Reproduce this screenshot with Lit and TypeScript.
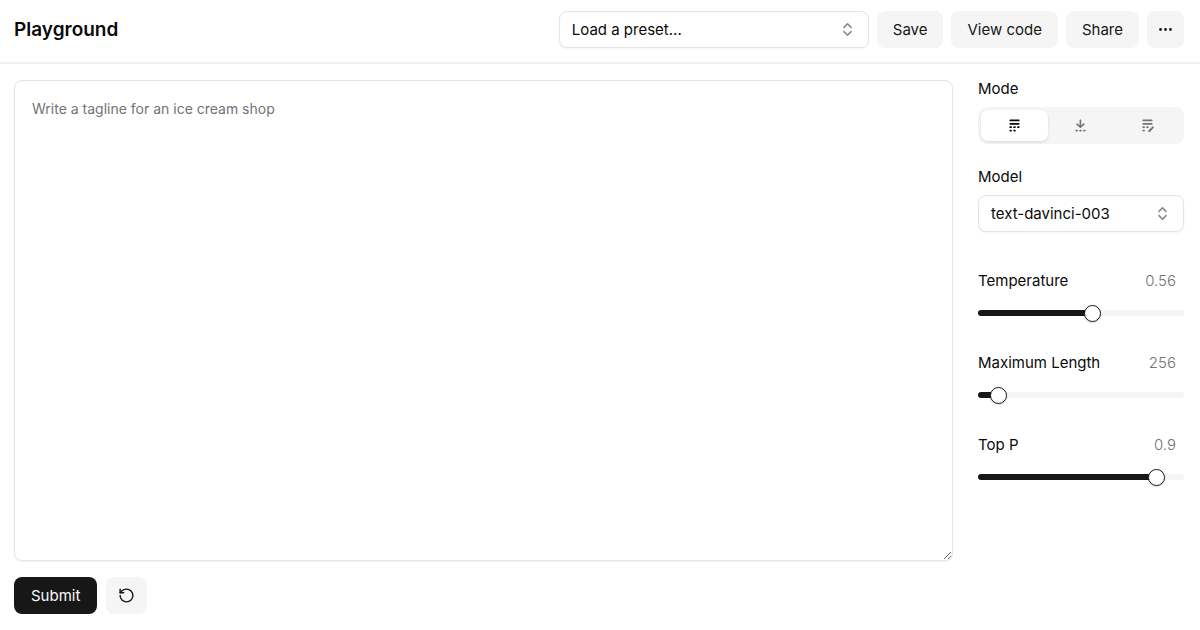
import { LitElement, html, css, svg } from "lit";
import { customElement, property, state } from "lit/decorators.js";
import { classMap } from "lit/directives/class-map.js";
import { styleMap } from "lit/directives/style-map.js";

const dash = (x: number, y: number, w = 3) =>
  svg`<rect x=${x} y=${y} width=${w} height="2" rx="1"></rect>`;

const modes = [
  {
    id: "complete",
    label: "Complete",
    icon: svg`${dash(4, 3, 12)}${dash(4, 7, 12)}${dash(4, 11)}${dash(4, 15)}${dash(8.5, 11)}${dash(8.5, 15)}${dash(13, 11)}`,
  },
  {
    id: "insert",
    label: "Insert",
    icon: svg`<path fill-rule="evenodd" d="M14.491 7.769a.888.888 0 0 1 .287.648.888.888 0 0 1-.287.648l-3.916 3.667a1.013 1.013 0 0 1-.692.268c-.26 0-.509-.097-.692-.268L5.275 9.065A.886.886 0 0 1 5 8.42a.889.889 0 0 1 .287-.64c.181-.17.427-.267.683-.269.257-.002.504.09.69.258L8.903 9.87V3.917c0-.243.103-.477.287-.649.183-.171.432-.268.692-.268.26 0 .509.097.692.268a.888.888 0 0 1 .287.649V9.87l2.245-2.102c.183-.172.432-.269.692-.269.26 0 .508.097.692.269Z"></path>${dash(4, 15)}${dash(8.5, 15)}${dash(13, 15)}`,
  },
  {
    id: "edit",
    label: "Edit",
    icon: svg`${dash(4, 3, 12)}${dash(4, 7, 12)}${dash(4, 11)}${dash(4, 15)}${dash(8.5, 11)}<path d="M17.154 11.346a1.182 1.182 0 0 0-1.671 0L11 15.829V17.5h1.671l4.483-4.483a1.182 1.182 0 0 0 0-1.671Z"></path>`,
  },
];

@customElement("param-slider")
class ParamSlider extends LitElement {
  @property() label = "";
  @property({ type: Number }) value = 0;
  @property({ type: Number }) max = 1;
  @property({ type: Number }) step = 0.1;

  static styles = css`
    :host {
      display: block;
    }
    .row {
      display: flex;
      justify-content: space-between;
      line-height: 20px;
      padding: 4px 0;
    }
    .value {
      padding-right: 8px;
      font-weight: 300;
      color: #737373;
    }
    .range {
      display: block;
      appearance: none;
      width: 100%;
      height: 17px;
      margin: 9px 0 0;
      background: none;
    }
    .range::-webkit-slider-runnable-track {
      height: 6px;
      border-radius: 3px;
      background: linear-gradient(#171717, #171717) 0 0 / var(--fill) 100% no-repeat #f5f5f5;
    }
    .range::-webkit-slider-thumb {
      appearance: none;
      box-sizing: border-box;
      width: 17px;
      height: 17px;
      margin-top: -5px;
      border: 1px solid #171717;
      border-radius: 50%;
      background: #fff;
      box-shadow: 0 1px 2px rgb(0 0 0 / 0.15);
    }
  `;

  private onInput(e: Event) {
    this.value = Number((e.target as HTMLInputElement).value);
  }

  render() {
    const fill = `${(this.value / this.max) * 100}%`;
    return html`
      <div class="row">
        <label for="range">${this.label}</label>
        <output class="value" for="range">${this.value}</output>
      </div>
      <input
        id="range"
        class="range"
        type="range"
        min="0"
        max=${this.max}
        step=${this.step}
        .value=${String(this.value)}
        style=${styleMap({ "--fill": fill })}
        @input=${this.onInput}
      />
    `;
  }
}

@customElement("app-root")
class AppRoot extends LitElement {
  @state() private mode = "complete";

  static styles = css`
    :host {
      display: flex;
      flex-direction: column;
      min-height: 100vh;
      background: #fff;
      color: #0a0a0a;
      font: 400 15px/20px "Inter", "Open Sans", sans-serif;
    }
    * {
      box-sizing: border-box;
    }
    button,
    select,
    textarea {
      font: inherit;
      color: inherit;
      margin: 0;
    }
    .header {
      display: flex;
      align-items: center;
      justify-content: space-between;
      padding: 11px 16px 14px 14px;
      border-bottom: 2px solid #f1f1f1;
    }
    .title {
      margin: 0;
      font-size: 19px;
      font-weight: 600;
      line-height: 28px;
    }
    .actions {
      display: flex;
      gap: 8px;
    }
    .preset {
      width: 310px;
    }
    .picker {
      display: grid;
      align-items: center;
    }
    .select {
      grid-area: 1 / 1;
      appearance: none;
      width: 100%;
      height: 37px;
      padding: 0 40px 0 12px;
      border: 1px solid #e5e5e5;
      border-radius: 8px;
      background: #fff;
      box-shadow: 0 1px 2px rgb(0 0 0 / 0.05);
    }
    .chevrons {
      grid-area: 1 / 1;
      justify-self: end;
      margin-right: 13px;
      opacity: 0.5;
      pointer-events: none;
    }
    .button {
      display: inline-flex;
      align-items: center;
      justify-content: center;
      height: 37px;
      padding: 0 16px;
      border: 0;
      border-radius: 8px;
      background: #f5f5f5;
      color: #171717;
      white-space: nowrap;
    }
    .square {
      width: 37px;
      padding: 0;
    }
    .reset {
      padding: 0 12px;
    }
    .primary {
      padding: 0 17px;
      background: #171717;
      color: #fafafa;
    }
    .line {
      width: 17px;
      height: 17px;
      fill: none;
      stroke: currentColor;
      stroke-width: 2;
      stroke-linecap: round;
      stroke-linejoin: round;
    }
    .main {
      flex: 1;
      display: grid;
      grid-template-columns: minmax(0, 1fr) 206px;
      column-gap: 25px;
      padding: 16px 16px 16px 14px;
    }
    .editor {
      display: flex;
      flex-direction: column;
      gap: 16px;
    }
    .prompt {
      flex: 1;
      width: 100%;
      min-height: 400px;
      padding: 17px 17px;
      border: 1px solid #e5e5e5;
      border-radius: 8px;
      background: #fff;
      box-shadow: 0 1px 2px rgb(0 0 0 / 0.05);
      font-size: 14px;
      line-height: 22px;
      resize: vertical;
    }
    .prompt::placeholder {
      color: #737373;
    }
    .footer {
      display: flex;
      gap: 9px;
    }
    .side {
      display: flex;
      flex-direction: column;
      gap: 24px;
    }
    .field {
      display: grid;
      gap: 9px;
    }
    .caption {
      line-height: 18px;
    }
    .sliders {
      display: grid;
      gap: 28px;
      padding-top: 11px;
    }
    .tabs {
      display: grid;
      grid-template-columns: repeat(3, 1fr);
      height: 37px;
      padding: 3px;
      border-radius: 9px;
      background: #f5f5f5;
      color: #737373;
    }
    .tab {
      display: grid;
      place-items: center;
      padding: 0;
      border: 0;
      border-radius: 7px;
      background: none;
    }
    .active {
      background: #fff;
      color: #0a0a0a;
      box-shadow: 0 1px 3px rgb(0 0 0 / 0.12);
    }
    .glyph {
      width: 17px;
      height: 17px;
      fill: currentColor;
    }
  `;

  private chevrons() {
    return html`<svg class="line chevrons" viewBox="0 0 24 24" aria-hidden="true">
      <path d="m7 15 5 5 5-5"></path>
      <path d="m7 9 5-5 5 5"></path>
    </svg>`;
  }

  render() {
    return html`
      <header class="header">
        <h1 class="title">Playground</h1>
        <div class="actions">
          <div class="picker preset">
            <select class="select" aria-label="Load a preset">
              <option>Load a preset...</option>
            </select>
            ${this.chevrons()}
          </div>
          <button class="button" type="button">Save</button>
          <button class="button" type="button">View code</button>
          <button class="button" type="button">Share</button>
          <button class="button square" type="button" aria-label="Actions">
            <svg class="line" viewBox="0 0 24 24" aria-hidden="true">
              <circle cx="12" cy="12" r="1"></circle>
              <circle cx="19" cy="12" r="1"></circle>
              <circle cx="5" cy="12" r="1"></circle>
            </svg>
          </button>
        </div>
      </header>
      <main class="main">
        <section class="editor">
          <textarea class="prompt" aria-label="Prompt" placeholder="Write a tagline for an ice cream shop"></textarea>
          <div class="footer">
            <button class="button primary" type="button">Submit</button>
            <button class="button reset" type="button" aria-label="Show history">
              <svg class="line" viewBox="0 0 24 24" aria-hidden="true">
                <path d="M3 12a9 9 0 1 0 9-9 9.75 9.75 0 0 0-6.74 2.74L3 8"></path>
                <path d="M3 3v5h5"></path>
              </svg>
            </button>
          </div>
        </section>
        <aside class="side">
          <div class="field">
            <span class="caption" id="mode">Mode</span>
            <div class="tabs" role="tablist" aria-labelledby="mode">
              ${modes.map(
                (m) => html`<button
                  class=${classMap({ tab: true, active: this.mode === m.id })}
                  type="button"
                  role="tab"
                  aria-label=${m.label}
                  aria-selected=${this.mode === m.id ? "true" : "false"}
                  @click=${() => (this.mode = m.id)}
                >
                  <svg class="glyph" viewBox="0 0 20 20" aria-hidden="true">${m.icon}</svg>
                </button>`
              )}
            </div>
          </div>
          <div class="field">
            <label class="caption" for="model">Model</label>
            <div class="picker">
              <select class="select" id="model">
                <option>text-davinci-003</option>
              </select>
              ${this.chevrons()}
            </div>
          </div>
          <div class="sliders">
            <param-slider label="Temperature" .value=${0.56} .max=${1} .step=${0.01}></param-slider>
            <param-slider label="Maximum Length" .value=${256} .max=${4000} .step=${1}></param-slider>
            <param-slider label="Top P" .value=${0.9} .max=${1} .step=${0.1}></param-slider>
          </div>
        </aside>
      </main>
    `;
  }
}
